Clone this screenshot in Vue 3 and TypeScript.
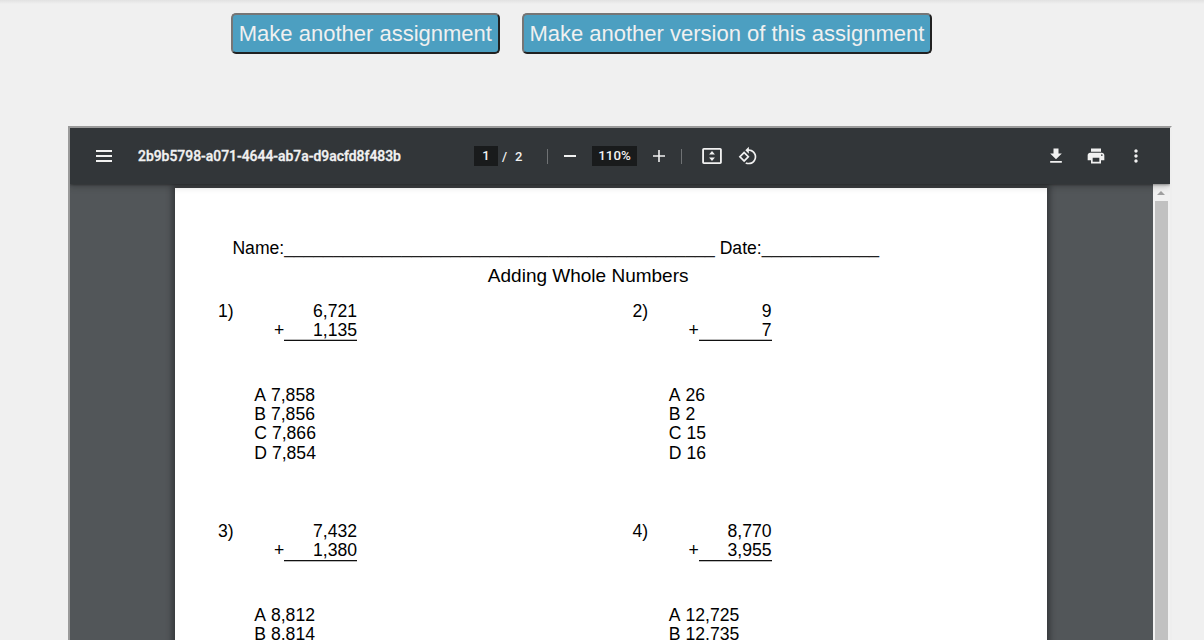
<script setup lang="ts">
interface Problem {
  id: number
  top: string
  bottom: string
  choices: string[]
}

const problems: Problem[] = [
  { id: 1, top: '6,721', bottom: '1,135', choices: ['A 7,858', 'B 7,856', 'C 7,866', 'D 7,854'] },
  { id: 2, top: '9', bottom: '7', choices: ['A 26', 'B 2', 'C 15', 'D 16'] },
  { id: 3, top: '7,432', bottom: '1,380', choices: ['A 8,812', 'B 8,814'] },
  { id: 4, top: '8,770', bottom: '3,955', choices: ['A 12,725', 'B 12,735'] },
]

const nameBlank = '_'.repeat(44)
const dateBlank = '_'.repeat(12)
</script>

<template>
  <div class="screen">
    <div class="actions">
      <button class="action" type="button">Make another assignment</button>
      <button class="action" type="button">Make another version of this assignment</button>
    </div>

    <div class="viewer">
      <header class="toolbar">
        <div class="side start">
          <svg class="menu" viewBox="0 0 16 12"><path d="M0 0h16v2H0zM0 5h16v2H0zM0 10h16v2H0z" /></svg>
          <span class="file">2b9b5798-a071-4644-ab7a-d9acfd8f483b</span>
        </div>
        <div class="center">
          <span class="box page-no">1</span>
          <span class="slash">/</span>
          <span class="total">2</span>
          <i class="sep first"></i>
          <svg class="zoom" viewBox="0 0 12 12"><path d="M0 5h12v2H0z" /></svg>
          <span class="box percent">110%</span>
          <svg class="zoom" viewBox="0 0 12 12"><path d="M0 5.2h5.2V0h1.6v5.2H12v1.6H6.8V12H5.2V6.8H0z" /></svg>
          <i class="sep second"></i>
          <svg class="icon" viewBox="0 0 24 24">
            <path fill-rule="evenodd" d="M21.8 2.4H2.2C1.1 2.4.2 3.3.2 4.4v15.2c0 1.1.9 2 2 2h19.6c1.1 0 2-.9 2-2V4.4c0-1.1-.9-2-2-2zM21.6 19.5H2.4V4.5h19.2zM12 6l3.5 4.2h-7zM12 18l3.5-4.2h-7z" />
          </svg>
          <svg class="icon rotate" viewBox="0 0 24 24">
            <path d="M7.34 6.41L.86 12.9l6.49 6.48 6.49-6.48-6.5-6.49zM3.69 12.9l3.66-3.66L11 12.9l-3.66 3.66-3.65-3.66zm15.67-6.26C17.61 4.88 15.3 4 13 4V.76L8.76 5 13 9.24V6c1.79 0 3.58.68 4.95 2.05 2.73 2.73 2.73 7.17 0 9.9C16.58 19.32 14.79 20 13 20c-.97 0-1.94-.21-2.84-.61l-1.49 1.49C10.02 21.62 11.51 22 13 22c2.3 0 4.61-.88 6.36-2.64 3.52-3.51 3.52-9.21 0-12.72z" />
          </svg>
        </div>
        <div class="side end">
          <svg class="icon" viewBox="0 0 24 24"><path d="M19 9h-4V3H9v6H5l7 7 7-7zM5 18v2h14v-2H5z" /></svg>
          <svg class="icon" viewBox="0 0 24 24">
            <path d="M19 8H5c-1.66 0-3 1.34-3 3v6h4v4h12v-4h4v-6c0-1.66-1.34-3-3-3zm-3 11H8v-5h8v5zm3-7c-.55 0-1-.45-1-1s.45-1 1-1 1 .45 1 1-.45 1-1 1zm-1-9H6v4h12V3z" />
          </svg>
          <svg class="icon" viewBox="0 0 24 24">
            <path d="M12 8c1.1 0 2-.9 2-2s-.9-2-2-2-2 .9-2 2 .9 2 2 2zm0 2c-1.1 0-2 .9-2 2s.9 2 2 2 2-.9 2-2-.9-2-2-2zm0 6c-1.1 0-2 .9-2 2s.9 2 2 2 2-.9 2-2-.9-2-2-2z" />
          </svg>
        </div>
      </header>

      <div class="content">
        <main class="sheet">
          <div class="fields">Name:<span class="blank">{{ nameBlank }}</span> Date:<span class="blank">{{ dateBlank }}</span></div>
          <h1 class="title">Adding Whole Numbers</h1>
          <div class="problems">
            <section v-for="p in problems" :key="p.id" class="problem">
              <span class="number">{{ p.id }})</span>
              <div class="work">
                <div class="sum">
                  <div class="addend">{{ p.top }}</div>
                  <div class="addend last">
                    <span class="plus">+</span>
                    <span class="value" :class="p.id < 3 ? 'soft-above' : 'soft-below'">{{ p.bottom }}</span>
                  </div>
                </div>
                <div class="choices">
                  <div v-for="c in p.choices" :key="c">{{ c }}</div>
                </div>
              </div>
            </section>
          </div>
        </main>
        <div class="scrollbar">
          <svg class="arrow" viewBox="0 0 8 4"><path d="M4 0l4 4H0z" /></svg>
          <div class="thumb"></div>
        </div>
      </div>
    </div>
  </div>
</template>

<style>
body {
  margin: 0;
  overflow: hidden;
}
</style>

<style scoped>
.screen {
  box-sizing: border-box;
  width: 1204px;
  height: 640px;
  overflow: hidden;
  padding-top: 13px;
  background: linear-gradient(#e2e2e2, #f0f0f0 4px);
  font-family: "Liberation Sans", Arial, sans-serif;
}
.actions {
  display: flex;
  gap: 21.85px;
  height: 41px;
  padding-left: 231px;
}
.action {
  box-sizing: border-box;
  height: 41px;
  padding: 0 5.8px;
  border: 2px solid;
  border-color: #767676 #212121 #212121 #767676;
  border-radius: 5px;
  background: #4c9fc1;
  color: #f0f0f0;
  font: 22px "Liberation Sans", Arial, sans-serif;
  white-space: nowrap;
}
.viewer {
  box-sizing: border-box;
  width: 1104px;
  height: 600px;
  margin: 72px 0 0 68px;
  border: 2px solid;
  border-color: #9a9a9a #eee #eee #9a9a9a;
  background: #525659;
}
.toolbar {
  position: relative;
  z-index: 1;
  display: flex;
  align-items: center;
  height: 56px;
  background: #323639;
  box-shadow: 0 -2px 8px rgba(0, 0, 0, 0.09), 0 4px 8px rgba(0, 0, 0, 0.06),
    0 1px 2px rgba(0, 0, 0, 0.3), 0 2px 6px rgba(0, 0, 0, 0.15);
  clip-path: inset(0 0 -16px 0);
  color: #f1f1f1;
  font: 500 13px Roboto, sans-serif;
}
svg {
  display: block;
  flex: none;
  fill: #f1f1f1;
}
.icon {
  width: 20px;
  height: 20px;
}
.start {
  display: flex;
  align-items: center;
  width: 378px;
  padding-left: 26px;
}
.menu {
  width: 16px;
  height: 12px;
}
.file {
  margin-left: 26px;
  font-size: 13.92px;
  font-weight: 500;
  -webkit-text-stroke: 0.35px #f1f1f1;
}
.center {
  display: flex;
  align-items: center;
}
.box {
  height: 20px;
  background: #191b1c;
  line-height: 20px;
  text-align: center;
}
.page-no {
  width: 24px;
}
.slash {
  width: 5px;
  margin-left: 4px;
}
.total {
  width: 8px;
  margin-left: 8px;
}
.sep {
  width: 1px;
  height: 15px;
  background: #6f7274;
}
.first {
  margin: 0 16px 0 24px;
}
.second {
  margin: 0 20px 0 16px;
}
.zoom {
  width: 12px;
  height: 12px;
}
.percent {
  width: 45px;
  margin: 0 16px;
  font-size: 13.3px;
}
.rotate {
  margin-left: 16px;
}
.end {
  display: flex;
  gap: 20px;
  margin-left: auto;
  padding-right: 24px;
}
.content {
  display: flex;
  justify-content: space-between;
  height: 540px;
}
.sheet {
  box-sizing: border-box;
  width: 872px;
  height: 600px;
  margin: 4px 0 0 105px;
  padding: 51px 0 0 43px;
  background: #fff;
  box-shadow: 0 0 6px 3px rgba(0, 0, 0, 0.35);
  color: #000;
  font-size: 17.6px;
  font-kerning: none;
  line-height: 19.36px;
}
.fields {
  height: 19.36px;
  padding-left: 14.4px;
  white-space: nowrap;
}
.blank {
  color: #222;
  line-height: 0;
  vertical-align: 1px;
}
.title {
  width: 740.4px;
  margin: 8px 0 0;
  font-size: 19px;
  font-weight: 400;
  line-height: 20px;
  text-align: center;
}
.problems {
  display: grid;
  grid-template-columns: 414.5px 414.5px;
  grid-auto-rows: 220px;
  margin-top: 15.34px;
}
.problem {
  display: flex;
}
.number {
  width: 36.3px;
}
.sum {
  width: 102.75px;
  text-align: right;
}
.last {
  display: flex;
  justify-content: flex-end;
}
.plus {
  width: 10px;
}
.value {
  width: 73px;
  border-bottom: 1px solid #111;
}
.soft-above {
  box-shadow: inset 0 -1px #bbb;
}
.soft-below {
  box-shadow: 0 1px #bbb;
}
.choices {
  margin-top: 44.2px;
}
.scrollbar {
  width: 17px;
  background: #f1f1f1;
}
.arrow {
  width: 8px;
  height: 4px;
  margin: 7px 0 6px 4px;
  fill: #a0a0a0;
}
.thumb {
  width: 13px;
  height: 500px;
  margin-left: 2px;
  background: #c1c1c1;
}
</style>
